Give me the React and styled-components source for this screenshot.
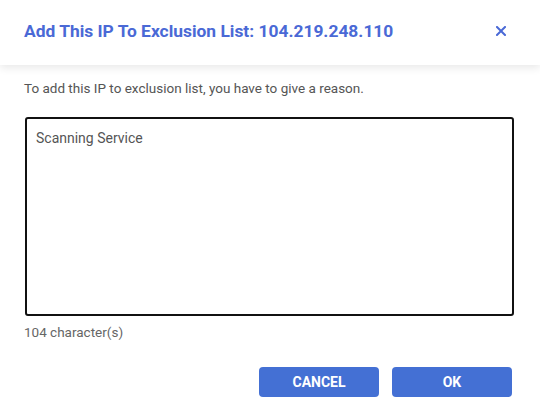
import React, { useEffect, useRef, useState } from "react";
import styled, { createGlobalStyle } from "styled-components";

const GlobalStyle = createGlobalStyle`
    html, body {
        margin: 0;
        padding: 0;
        background: #fff;
        font-family: Roboto, "Liberation Sans", Arial, sans-serif;
    }
`

const Dialog = styled.div`
    width: 540px;
    height: 420px;
    display: flex;
    flex-direction: column;
    background: #fff;
`

const Header = styled.div`
    height: 65px;
    flex-shrink: 0;
    display: flex;
    align-items: center;
    justify-content: space-between;
    padding: 0 31px 0 24px;
    box-shadow: 0 3px 8px rgba(0, 0, 0, 0.09);
    position: relative;
    z-index: 1;
`

const Title = styled.h2`
    margin: 0;
    font-size: 17.4px;
    font-weight: 700;
    color: #4a69d6;
    line-height: 24px;
    margin-top: -4px;
`

const CloseButton = styled.button`
    border: none;
    background: none;
    padding: 0;
    width: 16px;
    height: 16px;
    display: flex;
    align-items: center;
    justify-content: center;
    cursor: pointer;
    color: #4a69d6;
    margin-top: -4px;
`

const Body = styled.div`
    padding: 13px 26px 0 24px;
    display: flex;
    flex-direction: column;
`

const Hint = styled.p`
    margin: 0;
    font-size: 13.5px;
    line-height: 20px;
    color: #555;
`

const Reason = styled.textarea`
    margin: 19px 0 0 1px;
    box-sizing: border-box;
    width: 489px;
    height: 199px;
    border: 2px solid #111;
    border-radius: 3px;
    padding: 9px 9px;
    font-family: inherit;
    font-size: 14px;
    line-height: 20px;
    color: #555;
    caret-color: #000;
    resize: none;
    outline: none;
`

const Counter = styled.div`
    margin-top: 7px;
    font-size: 13.5px;
    line-height: 18px;
    color: #666;
`

const Actions = styled.div`
    display: flex;
    justify-content: flex-end;
    gap: 13px;
    margin-top: 26px;
    padding-right: 2px;
`

const Button = styled.button`
    width: 120px;
    height: 30px;
    border: none;
    border-radius: 4px;
    background: #4470d4;
    color: #fff;
    font-family: inherit;
    font-size: 14px;
    font-weight: 700;
    text-transform: uppercase;
    cursor: pointer;
`

function App() {
    const [reason, setReason] = useState('Scanning Service')
    const ref = useRef(null)

    useEffect(() => {
        const el = ref.current
        if (el) {
            el.focus()
            el.setSelectionRange(reason.length, reason.length)
        }
    }, [])

    return (
        <Dialog>
            <GlobalStyle />
            <Header>
                <Title>Add This IP To Exclusion List: 104.219.248.110</Title>
                <CloseButton aria-label="close">
                    <svg width="10" height="10" viewBox="0 0 10 10">
                        <path d="M1 1 L9 9 M9 1 L1 9" stroke="currentColor" strokeWidth="2" strokeLinecap="square" />
                    </svg>
                </CloseButton>
            </Header>
            <Body>
                <Hint>To add this IP to exclusion list, you have to give a reason.</Hint>
                <Reason ref={ref} value={reason} onChange={(e) => setReason(e.target.value)} />
                <Counter>104 character(s)</Counter>
                <Actions>
                    <Button>Cancel</Button>
                    <Button>OK</Button>
                </Actions>
            </Body>
        </Dialog>
    )
}

export default App
